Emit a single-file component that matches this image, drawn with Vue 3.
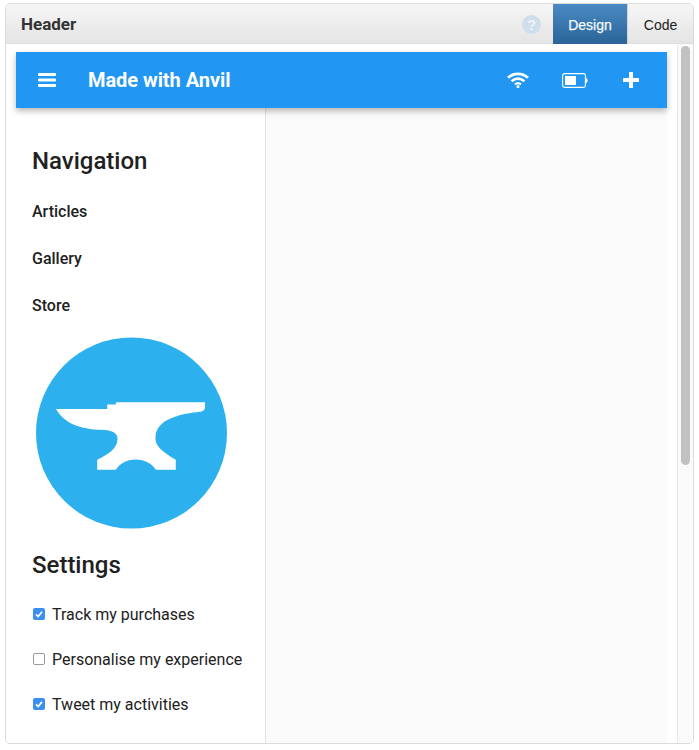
<script setup>
const nav = ['Articles', 'Gallery', 'Store']
const settings = [
  { label: 'Track my purchases', on: true },
  { label: 'Personalise my experience', on: false },
  { label: 'Tweet my activities', on: true },
]
</script>

<template>
  <div class="page">
    <div class="window">
      <header class="head">
        <span class="head-title">Header</span>
        <span class="help">?</span>
        <span class="tab tab-on">Design</span>
        <span class="tab">Code</span>
      </header>
      <div class="body">
        <div class="canvas">
          <div class="appbar">
            <svg class="burger" width="18" height="14" viewBox="0 0 18 14">
              <rect x="0" y="0" width="18" height="3" rx="1" fill="#fff" />
              <rect x="0" y="5.5" width="18" height="3" rx="1" fill="#fff" />
              <rect x="0" y="11" width="18" height="3" rx="1" fill="#fff" />
            </svg>
            <span class="app-title">Made with Anvil</span>
            <svg class="wifi" width="22" height="16" viewBox="0 0 22 16">
              <path d="M1 5.8C6.6 0.6 15.4 0.6 21 5.8" fill="none" stroke="#fff" stroke-width="2.7" />
              <path d="M4.6 9.2C8.4 5.8 13.6 5.8 17.4 9.2" fill="none" stroke="#fff" stroke-width="2.6" />
              <path d="M8 12.4C9.8 10.9 12.2 10.9 14 12.4" fill="none" stroke="#fff" stroke-width="2.2" />
              <circle cx="11" cy="14.6" r="1.5" fill="#fff" />
            </svg>
            <svg class="battery" width="26" height="15" viewBox="0 0 26 15">
              <path d="M3 .6H21.5Q23.4 .6 23.4 2.5V12.5Q23.4 14.4 21.5 14.4H3Q.6 14.4 .6 12V3Q.6 .6 3 .6Z" fill="none" stroke="#fff" stroke-width="1.1" />
              <rect x="3" y="3" width="11" height="9" fill="#fff" />
              <path d="M24 5Q25.6 5.4 25.6 7.5T24 10Z" fill="#fff" />
            </svg>
            <svg class="plus" width="16" height="16" viewBox="0 0 16 16">
              <path d="M8 1V15M1 8H15" stroke="#fff" stroke-width="4" stroke-linecap="round" fill="none" />
            </svg>
          </div>
          <div class="columns">
            <aside class="side">
              <h2 class="side-head">Navigation</h2>
              <a v-for="n in nav" :key="n" class="nav-link">{{ n }}</a>
              <svg class="logo" width="191" height="192" viewBox="48 20 574 575">
                <circle cx="335" cy="307.5" r="287" fill="#2cb1ee" />
                <path fill="#fff" d="M108 235L262 235L262 222L288 222L288 215L556 215L556 232Q553 243 540 244C490 250 410 262 407 320C405 345 425 362 468 388L468 418L408 418C398 400 375 387 347 387C320 387 298 400 288 418L232 418L232 388C265 372 293 355 293 325C293 305 270 299 245 298C180 295 135 280 108 235Z" />
              </svg>
              <h2 class="side-head settings-head">Settings</h2>
              <label v-for="s in settings" :key="s.label" class="check">
                <span class="box" :class="{ 'box-on': s.on }">
                  <svg v-if="s.on" width="12" height="12" viewBox="0 0 12 12">
                    <path d="M3 6.4L5.1 8.5L9 3.9" fill="none" stroke="#fff" stroke-width="1.7" />
                  </svg>
                </span>
                <span>{{ s.label }}</span>
              </label>
            </aside>
            <main class="content"></main>
          </div>
        </div>
        <div class="scroll">
          <div class="thumb"></div>
        </div>
      </div>
    </div>
  </div>
</template>

<style>
html, body { margin: 0; background: #fff; }
</style>

<style scoped>
.page {
  width: 699px;
  height: 750px;
  padding: 3px 0 0 5px;
  box-sizing: border-box;
  overflow: hidden;
}
.window {
  width: 689px;
  height: 741px;
  box-sizing: border-box;
  border: 1px solid #dcdcdc;
  border-radius: 5px;
  display: flex;
  flex-direction: column;
  overflow: hidden;
  font-family: Roboto, sans-serif;
  color: #222;
}
.head {
  height: 40px;
  box-sizing: border-box;
  flex: none;
  display: flex;
  align-items: center;
  background: linear-gradient(#f6f6f6, #e4e4e4);
  border-bottom: 1px solid #dedede;
}
.head-title {
  margin-left: 15px;
  font-weight: 700;
  font-size: 17px;
  color: #333;
  flex: 1;
}
.help {
  width: 19px;
  height: 19px;
  border-radius: 50%;
  background: #cfdeec;
  color: #f2f2f2;
  font: 700 15px/19px "Liberation Sans", sans-serif;
  text-align: center;
  margin: 2px 12px 0 0;
}
.tab {
  width: 65px;
  height: 40px;
  align-self: flex-start;
  box-sizing: border-box;
  text-align: center;
  font: 14px/42px "Liberation Sans", sans-serif;
  color: #222;
}
.tab-on {
  width: 75px;
  color: #f4f8fb;
  font-weight: 500;
  -webkit-text-stroke: .25px #f4f8fb;
  background: linear-gradient(#4a8ac4, #2a6498);
  border-right: 1px solid #d4d4d4;
}
.body {
  flex: 1;
  display: flex;
  min-height: 0;
}
.canvas {
  width: 661px;
  padding: 8px 0 0 10px;
  box-sizing: border-box;
  display: flex;
  flex-direction: column;
  margin-right: 10px;
}
.appbar {
  height: 56px;
  flex: none;
  background: #2196f3;
  display: flex;
  align-items: center;
  box-shadow: 0 3px 6px rgba(0, 0, 0, .28);
  position: relative;
  z-index: 1;
  color: #fff;
}
.burger { margin-left: 22px; flex: none; }
.app-title {
  margin-left: 32px;
  font-size: 20px;
  font-weight: 700;
  letter-spacing: -.05px;
  flex: 1;
}
.wifi { margin-right: 33px; margin-top: -1px; }
.battery { margin-right: 35px; }
.plus { margin-right: 28px; }
.columns {
  flex: 1;
  display: flex;
  min-height: 0;
}
.side {
  width: 250px;
  flex: none;
  box-sizing: border-box;
  border-right: 1px solid #e2e2e2;
  padding: 37px 0 0 16px;
  display: flex;
  flex-direction: column;
  align-items: flex-start;
  background: #fff;
}
.side-head {
  margin: 0;
  font-size: 24px;
  line-height: 32px;
  font-weight: 500;
  color: #212121;
}
.nav-link {
  height: 47px;
  line-height: 47px;
  font-size: 16px;
  font-weight: 500;
  color: #212121;
}
.nav-link:first-of-type { margin-top: 11px; }
.logo { margin: 8px 0 0 4px; flex: none; }
.settings-head { margin-top: 20px; }
.check {
  display: flex;
  align-items: center;
  height: 45px;
  font-size: 16px;
  color: #212121;
  gap: 7px;
  margin-left: 1px;
}
.check:first-of-type { margin-top: 11px; }
.box {
  width: 12px;
  height: 12px;
  margin-top: -1px;
  box-sizing: border-box;
  border: 1px solid #9a9a9a;
  border-radius: 2px;
  background: #fff;
  display: flex;
  align-items: center;
  justify-content: center;
}
.box-on {
  background: #3b8ff0;
  border: none;
}
.content {
  flex: 1;
  background: #fafafa;
}
.scroll {
  flex: 1;
  background: #fafafa;
  border-left: 1px solid #e8e8e8;
  padding: 2px 0 0 3px;
}
.thumb {
  width: 9px;
  height: 419px;
  border-radius: 5px;
  background: #c1c1c1;
}
</style>
